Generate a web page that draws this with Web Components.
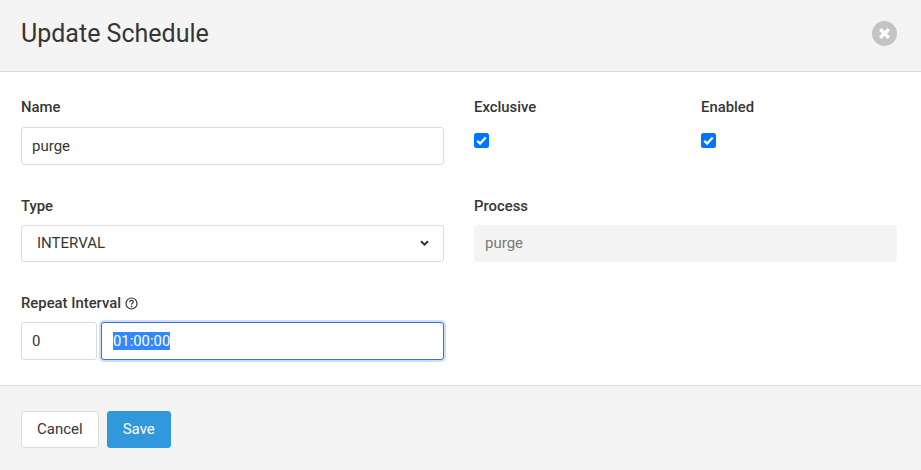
<!DOCTYPE html>
<html>
<head>
<meta charset="utf-8">
<title>Update Schedule</title>
<style>
  html, body { margin: 0; padding: 0; background: #fff; overflow: hidden; }
  body { font-family: Roboto, "Liberation Sans", sans-serif; font-size: 15px; color: #363636; }
</style>
</head>
<body>
<schedule-modal>
  <span slot="title">Update Schedule</span>

  <form-row>
    <form-field label="Name"><text-box>purge</text-box></form-field>
    <form-field>
      <check-row>
        <check-field label="Exclusive"></check-field>
        <check-field label="Enabled"></check-field>
      </check-row>
    </form-field>
  </form-row>

  <form-row>
    <form-field label="Type" tight><select-box>INTERVAL</select-box></form-field>
    <form-field label="Process" tight><text-box disabled>purge</text-box></form-field>
  </form-row>

  <form-row>
    <form-field label="Repeat Interval" tight help>
      <interval-input days="0" time="01:00:00"></interval-input>
    </form-field>
    <form-field></form-field>
  </form-row>

  <modal-button slot="footer">Cancel</modal-button>
  <modal-button slot="footer" primary>Save</modal-button>
</schedule-modal>

<script>
class ScheduleModal extends HTMLElement {
  constructor() {
    super();
    this.attachShadow({ mode: 'open' });
  }

  connectedCallback() {
    this.shadowRoot.innerHTML = `
      <style>
        :host { display: flex; flex-direction: column; width: 921px; height: 470px; background: #fff; }
        header {
          display: flex; align-items: center; justify-content: space-between;
          height: 66px; padding: 0 24px 5px 21px;
          background: #f4f4f4; border-bottom: 1px solid #dbdbdb; flex: none;
        }
        .title { font-size: 25px; line-height: 30px; margin-top: 2px; color: #363636; }
        .close { display: block; width: 25px; height: 25px; }
        main { flex: none; height: 313px; box-sizing: border-box; padding: 27px 24px 0 21px; }
        footer {
          flex: 1; display: flex; align-items: flex-start; gap: 8px;
          padding: 25px 21px 0; background: #f4f4f4; border-top: 1px solid #dbdbdb;
        }
      </style>
      <header>
        <div class="title"><slot name="title"></slot></div>
        <svg class="close" viewBox="0 0 25 25">
          <circle cx="12.5" cy="12.5" r="12.5" fill="#c4c4c4"/>
          <path d="M8.2 8.2l8.6 8.6M16.8 8.2l-8.6 8.6" stroke="#fff" stroke-width="3.4" fill="none"/>
        </svg>
      </header>
      <main><slot></slot></main>
      <footer><slot name="footer"></slot></footer>
    `;
  }
}

class FormRow extends HTMLElement {
  constructor() {
    super();
    this.attachShadow({ mode: 'open' });
  }

  connectedCallback() {
    this.shadowRoot.innerHTML = `
      <style>
        :host { display: grid; grid-template-columns: 423px 423px; column-gap: 30px; margin-bottom: 33px; }
      </style>
      <slot></slot>
    `;
  }
}

class FormField extends HTMLElement {
  constructor() {
    super();
    this.attachShadow({ mode: 'open' });
  }

  connectedCallback() {
    const label = this.getAttribute('label');
    const help = this.hasAttribute('help') ? `
      <svg viewBox="0 0 13 13" width="13" height="13">
        <circle cx="6.5" cy="6.5" r="5.5" fill="none" stroke="#363636" stroke-width="1.2"/>
        <path d="M4.7 5.2c0-1.1.8-1.8 1.8-1.8s1.8.7 1.8 1.6c0 1.3-1.8 1.3-1.8 2.7" fill="none" stroke="#363636" stroke-width="1.2"/>
        <circle cx="6.5" cy="9.6" r=".8" fill="#363636"/>
      </svg>` : '';
    this.shadowRoot.innerHTML = `
      <style>
        :host { display: block; min-width: 0; }
        label {
          display: flex; align-items: center; gap: 4px; height: 17px; margin-bottom: 11px;
          font-size: 14.85px; line-height: 17px; font-weight: 500; color: #363636;
        }
        :host([tight]) label { margin-bottom: 10px; }
      </style>
      ${label ? `<label>${label}${help}</label>` : ''}
      <slot></slot>
    `;
  }
}

class TextBox extends HTMLElement {
  constructor() {
    super();
    this.attachShadow({ mode: 'open' });
  }

  connectedCallback() {
    this.shadowRoot.innerHTML = `
      <style>
        :host {
          display: flex; align-items: center; height: 38px; box-sizing: border-box; padding: 0 10px;
          background: #fff; border: 1px solid #dbdbdb; border-radius: 3px;
          font-size: 15px; color: #363636;
        }
        :host([disabled]) { height: 37px; padding-bottom: 1px; background: #f4f4f4; border-color: #f4f4f4; color: #7a7a7a; }
      </style>
      <slot></slot>
    `;
  }
}

class SelectBox extends HTMLElement {
  constructor() {
    super();
    this.attachShadow({ mode: 'open' });
  }

  connectedCallback() {
    this.shadowRoot.innerHTML = `
      <style>
        :host {
          display: flex; align-items: center; justify-content: space-between;
          height: 37px; box-sizing: border-box; padding: 0 14px 1px 15px;
          background: #fff; border: 1px solid #dbdbdb; border-radius: 3px;
          font-size: 15px; color: #363636;
        }
        svg { display: block; }
      </style>
      <slot></slot>
      <svg viewBox="0 0 9 6" width="9" height="6">
        <path d="M1 1.2l3.5 3.4L8 1.2" fill="none" stroke="#27333f" stroke-width="2"/>
      </svg>
    `;
  }
}

class CheckRow extends HTMLElement {
  constructor() {
    super();
    this.attachShadow({ mode: 'open' });
  }

  connectedCallback() {
    this.shadowRoot.innerHTML = `
      <style>
        :host { display: grid; grid-template-columns: 227px 1fr; }
      </style>
      <slot></slot>
    `;
  }
}

class CheckField extends HTMLElement {
  constructor() {
    super();
    this.attachShadow({ mode: 'open' });
  }

  connectedCallback() {
    this.shadowRoot.innerHTML = `
      <style>
        :host { display: block; }
        label { display: block; height: 17px; margin-bottom: 17px; font-size: 14.85px; line-height: 17px; font-weight: 500; color: #363636; }
        svg { display: block; }
      </style>
      <label>${this.getAttribute('label')}</label>
      <svg viewBox="0 0 15 15" width="15" height="15">
        <rect width="15" height="15" rx="2.5" fill="#0075ff"/>
        <path d="M3.2 7.8l2.9 2.8 5.6-6" fill="none" stroke="#fff" stroke-width="2.2"/>
      </svg>
    `;
  }
}

class IntervalInput extends HTMLElement {
  constructor() {
    super();
    this.attachShadow({ mode: 'open' });
  }

  connectedCallback() {
    this.shadowRoot.innerHTML = `
      <style>
        :host { display: flex; gap: 4px; }
        .box {
          display: flex; align-items: center; height: 38px; box-sizing: border-box;
          border: 1px solid #dbdbdb; border-radius: 3px; background: #fff;
          font-size: 15px; color: #363636;
        }
        .days { width: 76px; padding: 0 10px; flex: none; }
        .time {
          flex: 1; padding: 0 11px; border-color: #3e70d6;
          box-shadow: 0 0 0 2px #cfdef8;
        }
        .time span { background: #3388ff; color: #fff; line-height: 18px; font-size: 14.85px; }
      </style>
      <div class="box days">${this.getAttribute('days')}</div>
      <div class="box time"><span>${this.getAttribute('time')}</span></div>
    `;
  }
}

class ModalButton extends HTMLElement {
  constructor() {
    super();
    this.attachShadow({ mode: 'open' });
  }

  connectedCallback() {
    this.shadowRoot.innerHTML = `
      <style>
        :host {
          display: inline-flex; align-items: center; justify-content: center;
          height: 37px; padding: 0 15px 1px; box-sizing: border-box;
          background: #fff; border: 1px solid #dbdbdb; border-radius: 3px;
          font-size: 15px; color: #363636;
        }
        :host([primary]) { background: #3298dc; border-color: #3298dc; color: #fff; }
      </style>
      <slot></slot>
    `;
  }
}

customElements.define('schedule-modal', ScheduleModal);
customElements.define('form-row', FormRow);
customElements.define('form-field', FormField);
customElements.define('text-box', TextBox);
customElements.define('select-box', SelectBox);
customElements.define('check-row', CheckRow);
customElements.define('check-field', CheckField);
customElements.define('interval-input', IntervalInput);
customElements.define('modal-button', ModalButton);
</script>
</body>
</html>
